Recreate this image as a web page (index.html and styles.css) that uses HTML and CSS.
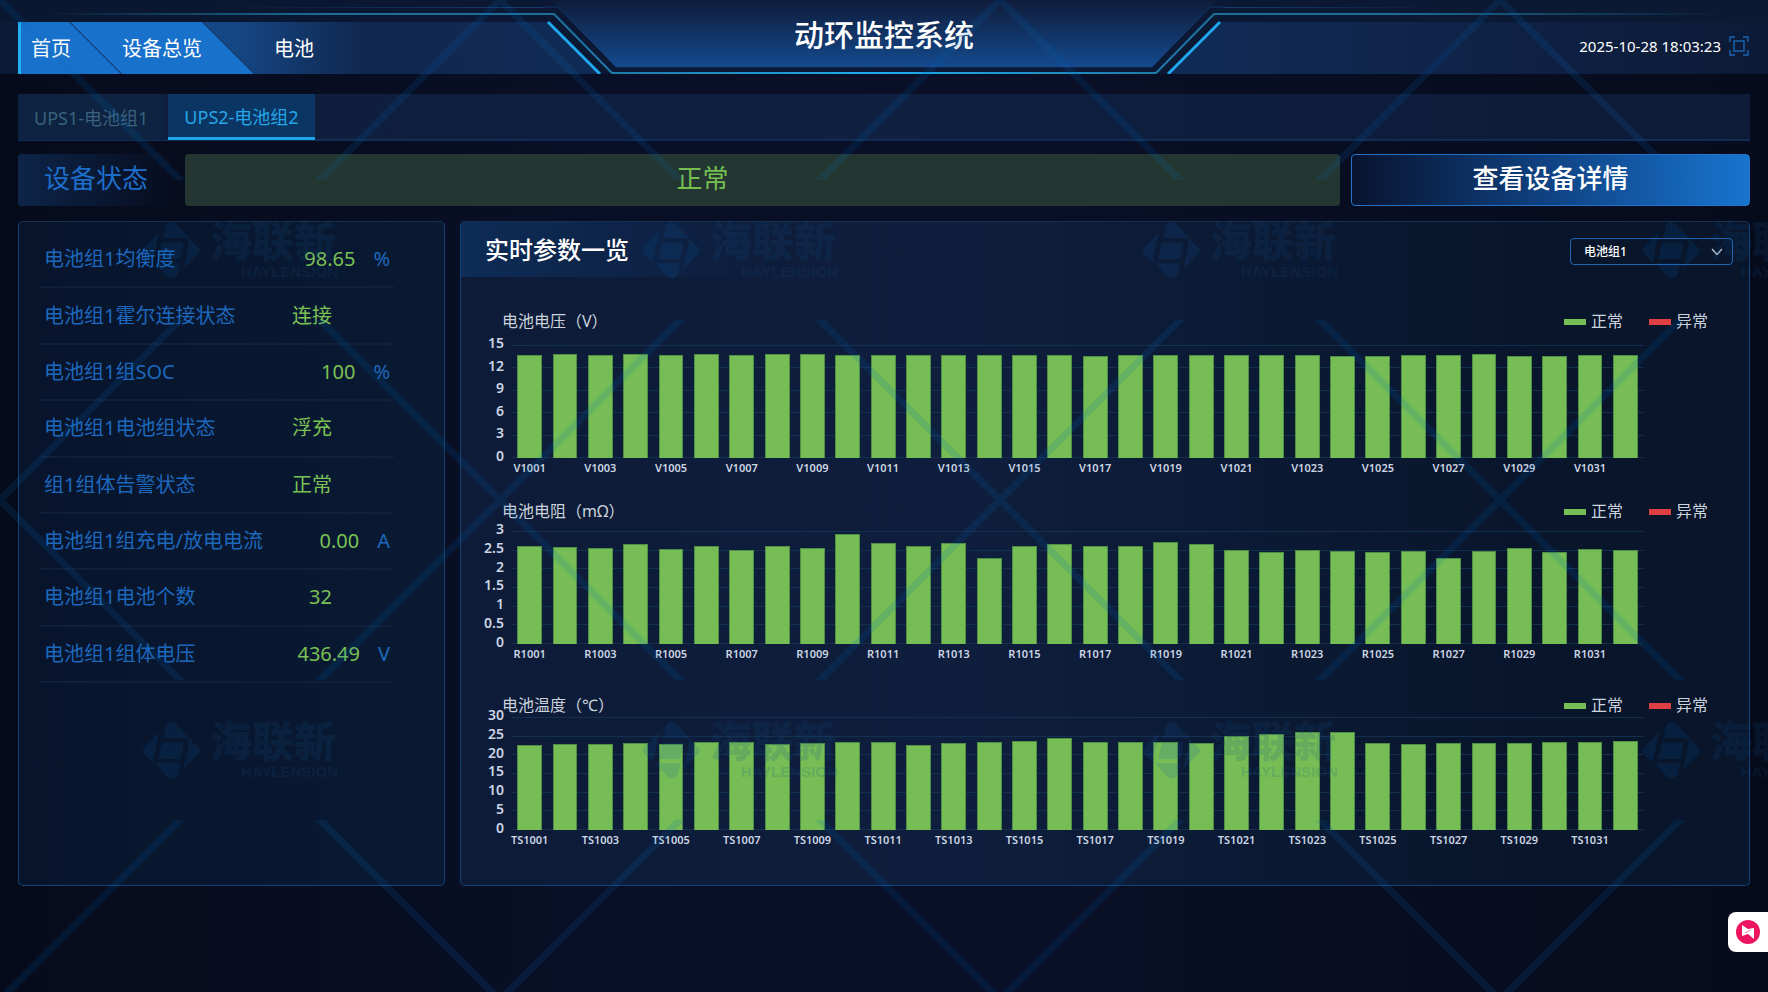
FILE: index.html
```html
<!DOCTYPE html>
<html lang="zh-CN">
<head>
    <meta charset="UTF-8">
    <meta name="viewport" content="width=device-width, initial-scale=1.0">
    <title>动环监控系统</title>
    <link rel="stylesheet" href="styles.css">
</head>
<body>
    <header class="header">
        <div class="header-side header-left">
            <nav class="nav">
                <a class="nav-item home" href="#">首页</a>
                <a class="nav-item overview" href="#">设备总览</a>
                <a class="nav-item current" href="#">电池</a>
            </nav>
        </div>
        <div class="header-center">
            <svg class="header-frame" viewBox="0 0 680 74" aria-hidden="true">
                <defs>
                    <linearGradient id="titleFill" x1="0" y1="0" x2="0" y2="1">
                        <stop offset="0" stop-color="#0f1c3a"/>
                        <stop offset="1" stop-color="#144a8e"/>
                    </linearGradient>
                    <linearGradient id="titleLine" x1="0" y1="0" x2="1" y2="0">
                        <stop offset="0" stop-color="#1c6f98"/>
                        <stop offset="0.5" stop-color="#20aef0"/>
                        <stop offset="1" stop-color="#1c6f98"/>
                    </linearGradient>
                </defs>
                <path d="M0 22H3L55 74H0Z M680 22H677L625 74H680Z" fill="#112a55"/>
                <path d="M8 0L14 7L72 67H608L666 7L672 0Z" fill="url(#titleFill)"/>
                <path d="M0 7H14L72 67H608L666 7H680" fill="none" stroke="#174a86" stroke-opacity="0.6"/>
                <path d="M0 14H10L68 73H612L670 14H680" fill="none" stroke="url(#titleLine)" stroke-width="2"/>
                <path d="M4 22L56 74 M676 22L624 74" stroke="#1fa8ee" stroke-width="3"/>
            </svg>
            <h1 class="title">动环监控系统</h1>
        </div>
        <div class="header-side header-right">
            <time class="clock" datetime="2025-10-28T18:03:23">2025-10-28 18:03:23</time>
            <button class="fullscreen" type="button" aria-label="全屏">
                <svg width="20" height="20" viewBox="0 0 20 20" fill="none" stroke="#1a66b4">
                    <path d="M1 6V1H6 M14 1H19V6 M19 14V19H14 M6 19H1V14" stroke-width="1.4"/>
                    <rect x="5" y="5" width="10" height="10" stroke-width="1.4"/>
                </svg>
            </button>
        </div>
    </header>

    <main class="content">
        <div class="tabs">
            <button class="tab" type="button">UPS1-电池组1</button>
            <button class="tab active" type="button">UPS2-电池组2</button>
        </div>

        <div class="status-row">
            <div class="status-label">设备状态</div>
            <div class="status-value">正常</div>
            <button class="detail-button" type="button">查看设备详情</button>
        </div>

        <div class="panels">
            <section class="panel summary">
                <ul class="params">
                    <li><span>电池组1均衡度</span><b>98.65</b><i>%</i></li>
                    <li class="no-unit"><span>电池组1霍尔连接状态</span><b>连接</b></li>
                    <li><span>电池组1组SOC</span><b>100</b><i>%</i></li>
                    <li class="no-unit"><span>电池组1电池组状态</span><b>浮充</b></li>
                    <li class="no-unit"><span>组1组体告警状态</span><b>正常</b></li>
                    <li><span>电池组1组充电/放电电流</span><b>0.00</b><i>A</i></li>
                    <li class="no-unit"><span>电池组1电池个数</span><b>32</b></li>
                    <li><span>电池组1组体电压</span><b>436.49</b><i>V</i></li>
                </ul>
            </section>

            <section class="panel realtime">
                <div class="panel-head">
                    <h2>实时参数一览</h2>
                    <div class="group-select">
                        <select aria-label="电池组">
                            <option>电池组1</option>
                        </select>
                        <svg width="12" height="8" viewBox="0 0 12 8" aria-hidden="true">
                            <path d="M1 1L6 6.500L11 1" fill="none" stroke="#c3cad8" stroke-width="1.3"/>
                        </svg>
                    </div>
                </div>
                <div class="charts">
                    <div class="chart voltage" id="voltage"></div>
                    <div class="chart resistance" id="resistance"></div>
                    <div class="chart temperature" id="temperature"></div>
                </div>
            </section>
        </div>
    </main>

    <button class="float-button" type="button" aria-label="工具">
        <svg width="26" height="26" viewBox="0 0 26 26">
            <circle cx="13" cy="13" r="12" fill="#ee1560"/>
            <path d="M7 6L13 10L19 9V20L13 15L7 17Z" fill="#fff"/>
            <path d="M10 14L16 11" stroke="#ee1560" stroke-opacity="0.5"/>
        </svg>
    </button>

    <svg class="watermark" aria-hidden="true">
        <defs>
            <pattern id="mark" width="500" height="500" patternUnits="userSpaceOnUse">
                <path d="M0 0H5L185 180H175L0 5Z M500 0H495L315 180H325L500 5Z M0 500H5L185 320H175L0 495Z M500 500H495L315 320H325L500 495Z" fill="#0069be" fill-opacity="0.14"/>
                <g transform="translate(0 180) scale(0.3333)" fill="#0a5ca8" fill-opacity="0.16">
                    <path d="M499 134Q514 118 530 134L573 180Q565 174 552 174H489Z"/>
                    <path d="M477 156L434 200Q424 212 434 223L461 250Q458 243 461 232Z"/>
                    <path d="M486 188H551L541 237H475Z"/>
                    <path d="M570 179L594 202Q606 212 594 223L550 266L566 195Q568 186 564 180Z"/>
                    <path d="M466 250H541L532 286Q516 304 500 289Z"/>
                </g>
                <g fill="#14508c" fill-opacity="0.16">
                    <text class="mark-name" x="210" y="257">海联新</text>
                    <text class="mark-latin" x="338" y="277" text-anchor="end">HAYLENSION</text>
                </g>
            </pattern>
        </defs>
        <rect width="100%" height="100%" fill="url(#mark)"/>
    </svg>

    <script>
        const charts = [
            {
                id: 'voltage', title: '电池电压（V）', prefix: 'V', max: 15, ticks: [15, 12, 9, 6, 3, 0],
                data: [13.71, 13.84, 13.71, 13.82, 13.62, 13.78, 13.71, 13.8, 13.8, 13.71, 13.71, 13.71, 13.71, 13.71, 13.67, 13.71,
                    13.49, 13.62, 13.71, 13.71, 13.71, 13.62, 13.71, 13.49, 13.58, 13.62, 13.71, 13.8, 13.58, 13.49, 13.71, 13.62]
            },
            {
                id: 'resistance', title: '电池电阻（mΩ）', prefix: 'R', max: 3, ticks: [3, 2.5, 2, 1.5, 1, 0.5, 0],
                data: [2.6, 2.58, 2.55, 2.65, 2.52, 2.6, 2.5, 2.59, 2.55, 2.91, 2.67, 2.59, 2.68, 2.29, 2.6, 2.65,
                    2.6, 2.6, 2.71, 2.65, 2.5, 2.44, 2.5, 2.48, 2.43, 2.48, 2.29, 2.48, 2.54, 2.45, 2.52, 2.5]
            },
            {
                id: 'temperature', title: '电池温度（℃）', prefix: 'TS', max: 30, ticks: [30, 25, 20, 15, 10, 5, 0],
                data: [22.5, 22.9, 22.8, 23.2, 22.8, 23.3, 23.4, 22.9, 23, 23.3, 23.3, 22.5, 23.1, 23.3, 23.7, 24.5,
                    23.4, 23.4, 23.4, 23, 24.9, 25.4, 26.1, 26.1, 23.1, 22.9, 23.1, 23, 23.2, 23.4, 23.4, 23.7]
            }
        ];

        charts.forEach(chart => {
            const ticks = chart.ticks.map(t => `<span>${t}</span>`).join('');
            const lines = chart.ticks.map(() => '<hr>').join('');
            const bars = chart.data.map(v => `<div class="bar" style="height: ${v / chart.max * 100}%"></div>`).join('');
            // only every second bar gets a label
            const labels = chart.data.map((v, i) => `<span>${i % 2 ? '' : chart.prefix + (1001 + i)}</span>`).join('');

            document.getElementById(chart.id).innerHTML = `
                <div class="chart-head">
                    <h3>${chart.title}</h3>
                    <div class="legend">
                        <span class="legend-item normal">正常</span>
                        <span class="legend-item abnormal">异常</span>
                    </div>
                </div>
                <div class="chart-body">
                    <div class="y-axis">${ticks}</div>
                    <div class="plot">
                        <div class="grid-lines">${lines}</div>
                        <div class="bars">${bars}</div>
                    </div>
                </div>
                <div class="x-axis">${labels}</div>`;
        });
    </script>
</body>
</html>
```

FILE: styles.css
```css
* {
    box-sizing: border-box;
}
body {
    margin: 0;
    min-height: 100vh;
    font-family: "Noto Sans", "Noto Sans CJK SC", sans-serif;
    color: #fff;
    background: linear-gradient(90deg, #060b1c 0%, #090f26 35%, #090f26 60%, #060b1c 100%);
}
h1, h2, h3, ul {
    margin: 0;
    padding: 0;
    font-weight: 400;
}
button, select {
    font-family: inherit;
    border: 0;
    margin: 0;
    padding: 0;
    color: inherit;
}

/* header */
.header {
    display: grid;
    grid-template-columns: 1fr 680px 1fr;
    height: 74px;
    background: linear-gradient(90deg, #0a1730, #0c1836 50%, #0b1932);
}
.header-side {
    display: flex;
    padding-top: 22px;
    background-repeat: no-repeat;
}
.header-left {
    padding-left: 18px;
    background-image:
        linear-gradient(90deg, transparent 40%, #14406f),
        linear-gradient(90deg, transparent 8%, #1c6f98 60%),
        linear-gradient(90deg, #0b1a36 18px, #0e2042 19px, #112a55);
    background-size: 100% 1px, 100% 2px, 100% 52px;
    background-position: 0 7px, 0 13px, 0 22px;
}
.header-right {
    align-items: center;
    justify-content: flex-end;
    gap: 8px;
    padding: 18px 19px 0 0;
    background-image:
        linear-gradient(270deg, transparent 60%, #14406f),
        linear-gradient(270deg, transparent 8%, #1c6f98 70%),
        linear-gradient(270deg, #0c1a36, #112a55);
    background-size: 100% 1px, 100% 2px, 100% 52px;
    background-position: 0 7px, 0 13px, 0 22px;
}
.header-center {
    display: grid;
}
.header-frame, .title {
    grid-area: 1 / 1;
}
.header-frame {
    width: 680px;
    height: 74px;
}
.title {
    font-size: 30px;
    font-weight: 500;
    line-height: 70px;
    text-align: center;
}
.nav {
    display: flex;
    height: 52px;
}
.nav-item {
    font-size: 20px;
    line-height: 54px;
    color: #fff;
    text-decoration: none;
    white-space: nowrap;
}
.home {
    padding: 0 50px 0 10px;
    border-left: 3px solid #1fb0f5;
    background: #1871cb;
    clip-path: polygon(0 0, calc(100% - 52px) 0, 100% 100%, 0 100%);
}
.overview {
    margin-left: -51px;
    padding: 0 52px;
    background: #1871cb;
    clip-path: polygon(0 0, calc(100% - 52px) 0, 100% 100%, 52px 100%);
}
.current {
    margin-left: -51px;
    padding: 0 54px 0 71px;
    background: linear-gradient(90deg, #154784 20%, transparent);
    clip-path: polygon(0 0, 100% 0, 100% 100%, 52px 100%);
}
.clock {
    font-size: 15px;
    line-height: 20px;
}
.fullscreen {
    width: 20px;
    height: 20px;
    background: none;
}
.fullscreen svg {
    display: block;
}

/* tabs */
.content {
    padding: 20px 18px 0;
}
.tabs {
    display: flex;
    gap: 4px;
    height: 47px;
    background: linear-gradient(90deg, #0f1d3b, #0f2041 50%, #0d1b37);
    border-bottom: 2px solid #112c54;
}
.tab {
    height: 46px;
    padding: 0 16px;
    font-size: 18px;
    color: #3a617e;
    background: #0d2341;
}
.tab.active {
    color: #25a5e8;
    background: #0b3563;
    border-bottom: 3px solid #1ea6e6;
}

/* device status */
.status-row {
    display: grid;
    grid-template-columns: 156px 1155fr 399fr;
    gap: 11px;
    margin-top: 13px;
    height: 52px;
    font-size: 26px;
    line-height: 48px;
}
.status-label {
    padding-left: 26px;
    color: #1d6ecb;
    border-radius: 4px;
    background: linear-gradient(90deg, #0d2548, transparent);
}
.status-value {
    padding-right: 120px;
    text-align: center;
    color: #74bf50;
    border-radius: 4px;
    background: #233631;
}
.detail-button {
    padding-bottom: 4px;
    font-size: 26px;
    font-weight: 500;
    line-height: 46px;
    border: 1px solid #2273cc;
    border-radius: 4px;
    background: linear-gradient(90deg, #08132e, #104384 50%, #1874cf);
}

/* panels */
.panels {
    display: grid;
    grid-template-columns: 427fr 1290fr;
    gap: 15px;
    margin-top: 15px;
}
.panel {
    border: 1px solid #124274;
    border-top-color: #15304f;
    border-radius: 5px;
}
.summary {
    padding: 10px 50px 0 21px;
    background: linear-gradient(90deg, #07142c, #0a1a33);
}
.params {
    display: grid;
    grid-auto-rows: 1fr;
    height: 451px;
    list-style: none;
}
.params li {
    display: flex;
    align-items: center;
    padding: 0 4px;
    font-size: 20px;
    line-height: 28px;
    color: #1d68bd;
    border-bottom: 2px solid #10203b;
}
.params span {
    flex: 1;
    white-space: nowrap;
}
.params b {
    font-weight: 400;
    color: #7ac155;
}
.params i {
    margin-left: 18px;
    font-style: normal;
}
.params .no-unit {
    padding-right: 62px;
}
.realtime {
    background: linear-gradient(90deg, #0d1b38, #0e1e3c 40%, #08152b 85%);
}
.panel-head {
    display: flex;
    justify-content: space-between;
    align-items: center;
    height: 55px;
    padding: 0 16px 0 24px;
    background: linear-gradient(90deg, #0e2c57, transparent 24%);
}
.panel-head h2 {
    font-size: 24px;
    font-weight: 500;
    line-height: 32px;
}
.group-select {
    position: relative;
    width: 163px;
    height: 27px;
    margin-top: 4px;
}
.group-select select {
    width: 100%;
    height: 100%;
    padding-left: 13px;
    font-size: 12px;
    font-weight: 500;
    appearance: none;
    background: transparent;
    border: 1px solid #2166b4;
    border-radius: 4px;
}
.group-select svg {
    position: absolute;
    right: 10px;
    top: 10px;
}

/* charts */
.charts {
    padding: 32px 41px 33px 20px;
}
.chart-head {
    display: flex;
    justify-content: space-between;
    height: 24px;
    padding-left: 21px;
    color: #ccd3dd;
}
.chart-head h3, .legend {
    font-size: 16px;
    line-height: 24px;
}
.legend {
    display: flex;
    gap: 26px;
}
.legend-item::before {
    content: "";
    display: inline-block;
    width: 22px;
    height: 6px;
    margin-right: 5px;
    vertical-align: 2px;
}
.normal::before {
    background: #76bd55;
}
.abnormal::before {
    background: #e03f42;
}
.chart-body {
    display: flex;
    height: 113px;
    padding-right: 65px;
}
.y-axis {
    display: flex;
    flex-direction: column;
    justify-content: space-between;
    width: 23px;
    margin: -11px 8px -7px 0;
    font-size: 14px;
    font-weight: 600;
    line-height: 18px;
    text-align: right;
    color: #cbd5e3;
}
.y-axis span {
    display: flex;
    justify-content: flex-end;
}
.plot {
    flex: 1;
    display: grid;
    grid-template-rows: 113px;
}
.grid-lines, .bars {
    grid-area: 1 / 1;
}
.grid-lines {
    display: flex;
    flex-direction: column;
    justify-content: space-between;
}
.grid-lines hr {
    width: 100%;
    height: 1px;
    margin: 0;
    border: 0;
    background: #14304f;
}
.bars {
    display: flex;
    justify-content: space-around;
    align-items: flex-end;
}
.bar {
    width: 2.2%;
    background: #76bd55;
    border: 1px solid #4f8f45;
    border-bottom: 0;
}
.x-axis {
    display: flex;
    height: 22px;
    padding: 0 65px 0 31px;
}
.x-axis span {
    flex: 1 1 0;
    width: 0;
    display: flex;
    justify-content: center;
    font-size: 11px;
    font-weight: 600;
    line-height: 20px;
    color: #ccd6e4;
}
.voltage .chart-body {
    margin-top: 12px;
}
.resistance {
    margin-top: 19px;
}
.resistance .chart-body {
    margin-top: 8px;
}
.temperature {
    margin-top: 27px;
}

/* floating tool */
.float-button {
    position: fixed;
    right: 0;
    top: 912px;
    width: 40px;
    height: 40px;
    padding: 7px;
    border-radius: 8px 0 0 8px;
    background: #fff;
}
.float-button svg {
    display: block;
}

/* watermark */
.watermark {
    position: fixed;
    inset: 0;
    width: 100%;
    height: 100%;
    pointer-events: none;
}
.mark-name {
    font-size: 42px;
    font-weight: 900;
    font-family: "Noto Sans CJK SC", sans-serif;
}
.mark-latin {
    font-size: 15px;
    font-weight: 700;
    font-family: "Liberation Sans", sans-serif;
}
```
